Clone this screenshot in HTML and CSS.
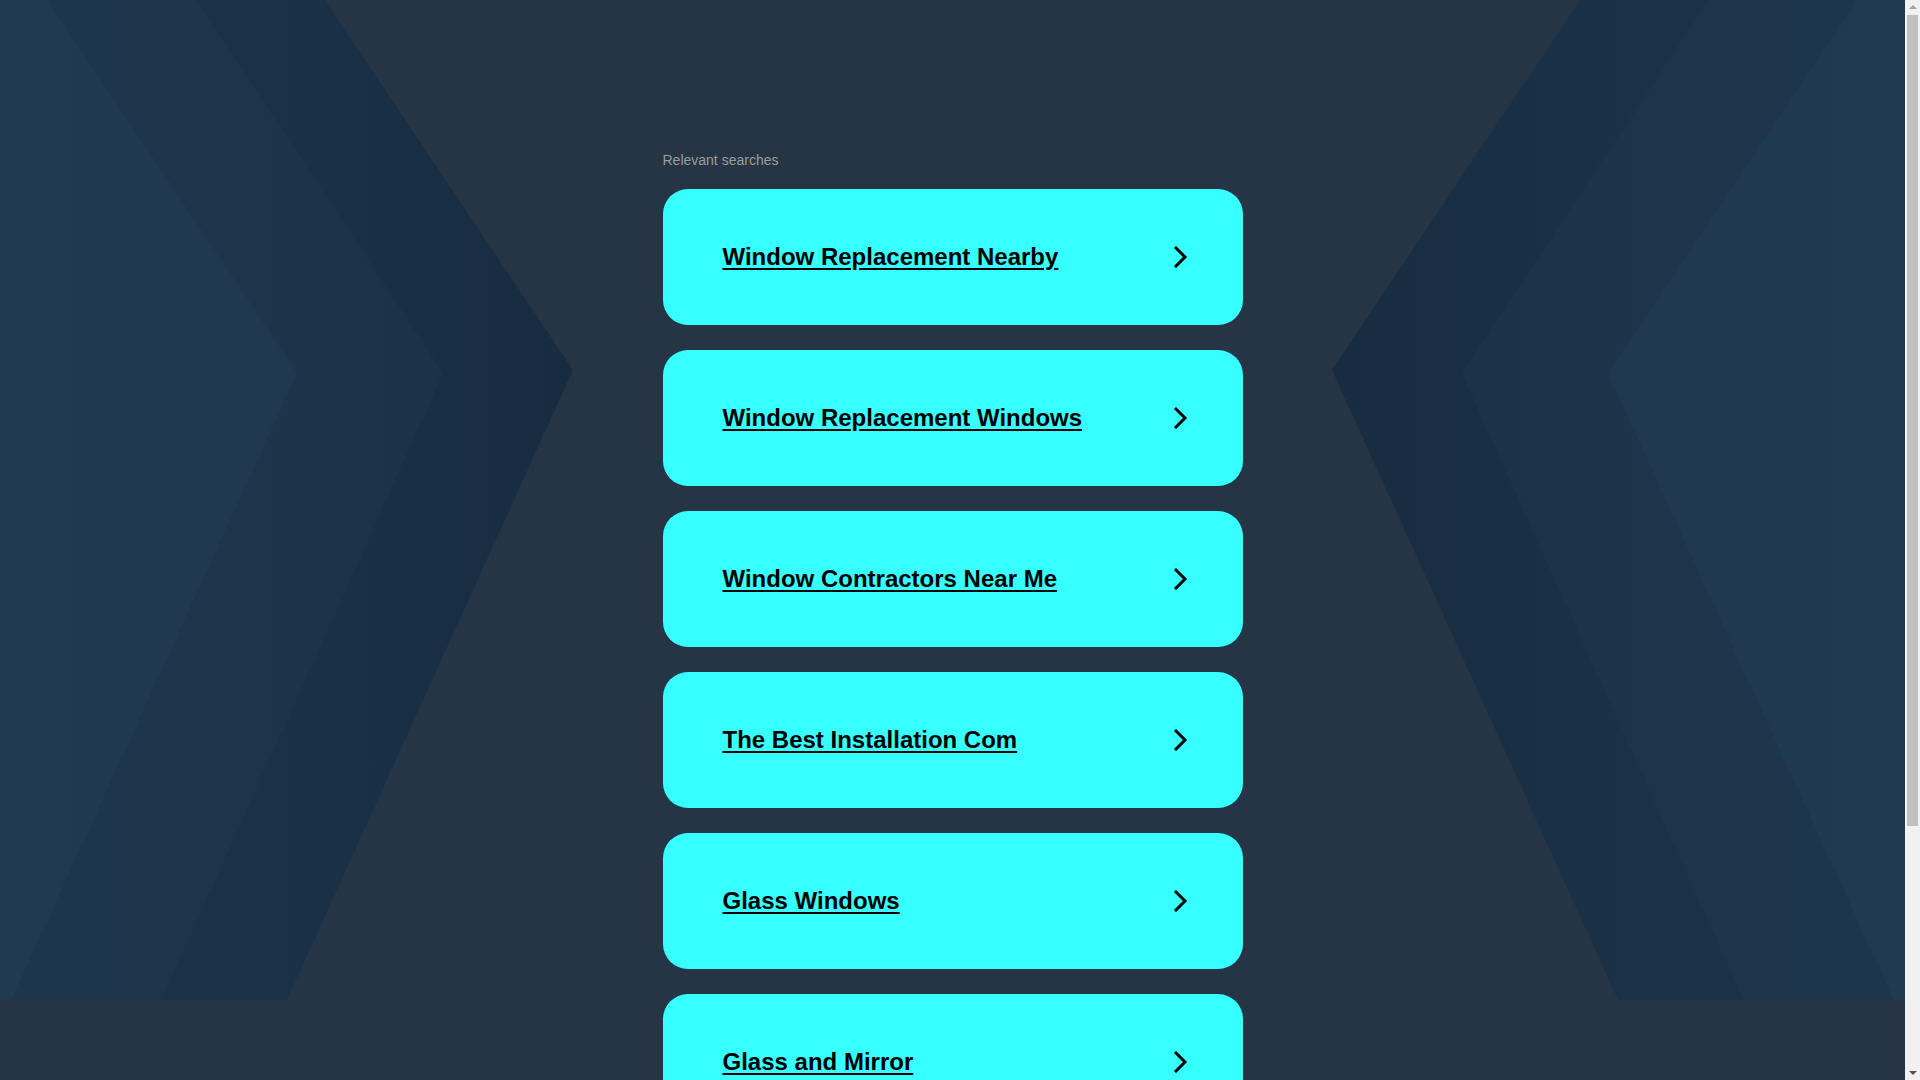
FILE: index.html
```html
<!DOCTYPE html>
<html lang="en">
<head>
<meta charset="utf-8">
<title>Relevant searches</title>
<link rel="stylesheet" href="styles.css">
</head>
<body>
<div class="viewport">
<div class="page">
  <svg class="backdrop" viewBox="0 0 1905 1000" preserveAspectRatio="none" aria-hidden="true">
    <defs>
      <linearGradient id="gOuter" x1="0" y1="0" x2="1" y2="0">
        <stop offset="0" stop-color="#1c3349"/>
        <stop offset="0.6" stop-color="#1a3046"/>
        <stop offset="1" stop-color="#172c41"/>
      </linearGradient>
      <linearGradient id="gMid" x1="0" y1="0" x2="1" y2="0">
        <stop offset="0" stop-color="#1e364d"/>
        <stop offset="1" stop-color="#1c3249"/>
      </linearGradient>
      <linearGradient id="gInner" x1="0" y1="0" x2="1" y2="0">
        <stop offset="0" stop-color="#203a52"/>
        <stop offset="1" stop-color="#1f384f"/>
      </linearGradient>
    </defs>
    <g>
      <polygon points="0,0 325,0 573,370 287,1000 0,1000" fill="url(#gOuter)"/>
      <polygon points="0,0 196,0 443,373 161,1000 0,1000" fill="url(#gMid)"/>
      <polygon points="0,0 47,0 297,373 11,1000 0,1000" fill="url(#gInner)"/>
    </g>
    <g transform="translate(1905,0) scale(-1,1)">
      <polygon points="0,0 325,0 573,370 287,1000 0,1000" fill="url(#gOuter)"/>
      <polygon points="0,0 196,0 443,373 161,1000 0,1000" fill="url(#gMid)"/>
      <polygon points="0,0 47,0 297,373 11,1000 0,1000" fill="url(#gInner)"/>
    </g>
  </svg>

  <main class="content">
    <p class="label">Relevant searches</p>
    <ul class="results">
      <li class="card"><a href="#" class="card-link">Window Replacement Nearby</a><svg class="chev" viewBox="0 0 14 22" aria-hidden="true"><polyline points="2,2 11,11 2,20"/></svg></li>
      <li class="card"><a href="#" class="card-link">Window Replacement Windows</a><svg class="chev" viewBox="0 0 14 22" aria-hidden="true"><polyline points="2,2 11,11 2,20"/></svg></li>
      <li class="card"><a href="#" class="card-link">Window Contractors Near Me</a><svg class="chev" viewBox="0 0 14 22" aria-hidden="true"><polyline points="2,2 11,11 2,20"/></svg></li>
      <li class="card"><a href="#" class="card-link">The Best Installation Com</a><svg class="chev" viewBox="0 0 14 22" aria-hidden="true"><polyline points="2,2 11,11 2,20"/></svg></li>
      <li class="card"><a href="#" class="card-link">Glass Windows</a><svg class="chev" viewBox="0 0 14 22" aria-hidden="true"><polyline points="2,2 11,11 2,20"/></svg></li>
      <li class="card"><a href="#" class="card-link">Glass and Mirror</a><svg class="chev" viewBox="0 0 14 22" aria-hidden="true"><polyline points="2,2 11,11 2,20"/></svg></li>
    </ul>
  </main>
</div>
</div>
<div class="scrollbar" aria-hidden="true">
  <span class="sb-btn sb-up"></span>
  <span class="sb-track"><span class="sb-thumb"></span></span>
  <span class="sb-btn sb-down"></span>
</div>
</body>
</html>
```

FILE: styles.css
```css
html, body {
  margin: 0;
  padding: 0;
  height: 100%;
  overflow: hidden;
}

body {
  display: flex;
  background: #263545;
  font-family: "Liberation Sans", Arial, sans-serif;
  color: #000;
}

.viewport {
  flex: 1;
  min-width: 0;
  height: 100vh;
  overflow-y: auto;
  overflow-x: hidden;
}

/* classic browser scrollbar look */
.scrollbar {
  flex: none;
  width: 15px;
  height: 100vh;
  background: #f1f1f1;
  display: flex;
  flex-direction: column;
}

.sb-btn {
  flex: none;
  height: 15px;
  display: flex;
  align-items: center;
  justify-content: center;
}

.sb-up::before {
  content: "";
  width: 0;
  height: 0;
  margin-top: -1px;
  border-left: 4px solid transparent;
  border-right: 4px solid transparent;
  border-bottom: 4px solid #a3a3a3;
}

.sb-down::before {
  content: "";
  width: 0;
  height: 0;
  margin-top: 1px;
  border-left: 4px solid transparent;
  border-right: 4px solid transparent;
  border-top: 4px solid #505050;
}

.sb-track {
  flex: 1;
  padding: 0 2px;
}

.sb-thumb {
  display: block;
  height: 811px;
  background: #c1c1c1;
}

.page {
  display: grid;
  grid-template-columns: 100%;
}

.backdrop {
  grid-area: 1 / 1;
  display: block;
  width: 100%;
  height: 1000px;
}

.content {
  grid-area: 1 / 1;
  justify-self: center;
  width: 580px;
  padding: 152px 0 270px;
}

.label {
  margin: 0 0 21px;
  font-size: 14px;
  line-height: 16px;
  color: #9c9c9c;
}

.results {
  list-style: none;
  margin: 0;
  padding: 0;
  display: flex;
  flex-direction: column;
  gap: 25px;
}

.card {
  height: 136px;
  box-sizing: border-box;
  padding: 0 55px 0 60px;
  background: #37ffff;
  border-radius: 25px;
  display: flex;
  align-items: center;
  justify-content: space-between;
}

.card-link {
  font-size: 24px;
  font-weight: bold;
  color: #000;
  text-decoration: underline;
  text-decoration-thickness: 2px;
  text-underline-offset: 3px;
}

.chev {
  width: 14px;
  height: 22px;
  flex: none;
  fill: none;
  stroke: #000;
  stroke-width: 3;
  stroke-linecap: square;
  stroke-linejoin: miter;
}
```
